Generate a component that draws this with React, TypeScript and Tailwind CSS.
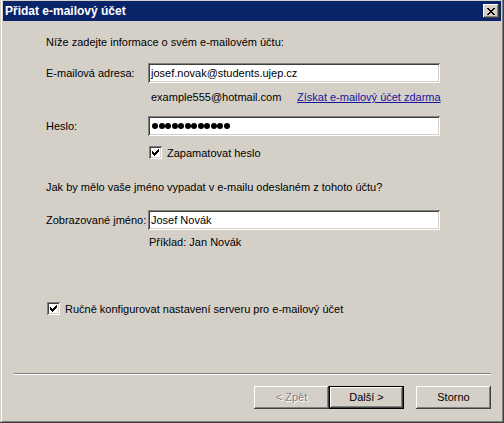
import React from "react";

const raised =
  "shadow-[inset_-1px_-1px_0_#404040,inset_1px_1px_0_#ffffff,inset_-2px_-2px_0_#808080,inset_2px_2px_0_#d4d0c8]";
const sunken =
  "shadow-[inset_1px_1px_0_#808080,inset_-1px_-1px_0_#ffffff,inset_2px_2px_0_#404040,inset_-2px_-2px_0_#d4d0c8]";

function CheckMark() {
  return (
    <svg width="7" height="7" viewBox="0 0 7 7" shapeRendering="crispEdges">
      <path
        fill="#000"
        d="M6 0h1v1h-1z M5 1h2v1h-2z M0 2h1v1h-1z M4 2h3v1h-3z M0 3h2v1h-2z M3 3h3v1h-3z M0 4h5v1h-5z M1 5h3v1h-3z M2 6h1v1h-1z"
      />
    </svg>
  );
}

function CheckBox({ label }: { label: string }) {
  return (
    <div className="flex items-center h-[13px]">
      <div className={`w-[13px] h-[13px] bg-white flex items-center justify-center ${sunken}`}>
        <CheckMark />
      </div>
      <span className="ml-[5px] leading-[14px] whitespace-nowrap">{label}</span>
    </div>
  );
}

function TextBox({ children }: { children?: React.ReactNode }) {
  return (
    <div className={`w-[292px] h-[20px] bg-white flex items-center pl-[3px] ${sunken}`}>
      {children}
    </div>
  );
}

function Field({ label, children }: { label: string; children: React.ReactNode }) {
  return (
    <div className="flex items-center h-[20px]">
      <span className="w-[102px] leading-[14px] whitespace-nowrap">{label}</span>
      {children}
    </div>
  );
}

function Button({
  label,
  disabled,
  primary,
}: {
  label: string;
  disabled?: boolean;
  primary?: boolean;
}) {
  const face = (
    <div
      className={`w-full h-full flex items-center justify-center ${raised} ${
        disabled ? "text-[#808080] [text-shadow:1px_1px_0_#ffffff]" : "text-black"
      }`}
    >
      {label}
    </div>
  );
  return primary ? (
    <div className="w-[75px] h-[23px] border border-black">{face}</div>
  ) : (
    <div className="w-[75px] h-[23px]">{face}</div>
  );
}

export default function App() {
  return (
    <div className="w-[504px] h-[423px] bg-[#d4d0c8] pl-px border-r border-b border-[#404040] font-['Liberation_Sans',Arial,sans-serif] text-[11px] text-black select-none">
      <div className="h-full flex flex-col border-l border-l-white border-r border-r-[#808080] border-b border-b-[#808080] pt-px px-px">
        {/* caption */}
        <div className="h-[20px] shrink-0 bg-[#0a246a] flex items-center pl-[2px] pr-[2px]">
          <span className="text-white font-bold text-[12px] leading-[14px] flex-1">
            Přidat e-mailový účet
          </span>
          <div className={`w-[16px] h-[14px] bg-[#d4d0c8] flex items-center justify-center ${raised}`}>
            <svg width="8" height="7" viewBox="0 0 8 7" shapeRendering="crispEdges">
              <path
                fill="#000"
                d="M0 0h2v1h-2z M6 0h2v1h-2z M1 1h2v1h-2z M5 1h2v1h-2z M2 2h4v1h-4z M3 3h2v1h-2z M2 4h4v1h-4z M1 5h2v1h-2z M5 5h2v1h-2z M0 6h2v1h-2z M6 6h2v1h-2z"
              />
            </svg>
          </div>
        </div>

        {/* page body */}
        <div className="flex flex-col pl-[43px]">
          <p className="mt-[14px] leading-[14px]">Níže zadejte informace o svém e-mailovém účtu:</p>

          <div className="mt-[14px]">
            <Field label="E-mailová adresa:">
              <TextBox>
                <span className="leading-[14px]">josef.novak@students.ujep.cz</span>
              </TextBox>
            </Field>
          </div>

          <div className="mt-[7px] h-[14px] flex leading-[14px] whitespace-nowrap">
            <span className="ml-[105px] w-[146px]">example555@hotmail.com</span>
            <span className="text-[#14149a] underline cursor-pointer">Získat e-mailový účet zdarma</span>
          </div>

          <div className="mt-[12px]">
            <Field label="Heslo:">
              <TextBox>
                <div className="flex gap-[0.5px] pl-px">
                  {Array.from({ length: 12 }).map((_, i) => (
                    <div key={i} className="w-[6px] h-[6px] rounded-full bg-black" />
                  ))}
                </div>
              </TextBox>
            </Field>
          </div>

          <div className="mt-[10px] ml-[103px]">
            <CheckBox label="Zapamatovat heslo" />
          </div>

          <p className="mt-[21px] leading-[14px]">
            Jak by mělo vaše jméno vypadat v e-mailu odeslaném z tohoto účtu?
          </p>

          <div className="mt-[16px]">
            <Field label="Zobrazované jméno:">
              <TextBox>
                <span className="leading-[14px]">Josef Novák</span>
              </TextBox>
            </Field>
          </div>

          <p className="mt-[5px] ml-[103px] leading-[14px]">Příklad: Jan Novák</p>

          <div className="mt-[53px] ml-px">
            <CheckBox label="Ručně konfigurovat nastavení serveru pro e-mailový účet" />
          </div>
        </div>

        {/* separator */}
        <div className="mt-[58px] ml-[11px] w-[477px] h-[2px] border-t border-t-[#808080] border-b border-b-white" />

        {/* wizard buttons */}
        <div className="mt-[11px] ml-[11px] w-[477px] flex justify-end">
          <Button label="< Zpět" disabled />
          <Button label="Další >" primary />
          <div className="w-[12px]" />
          <Button label="Storno" />
        </div>
      </div>
    </div>
  );
}
